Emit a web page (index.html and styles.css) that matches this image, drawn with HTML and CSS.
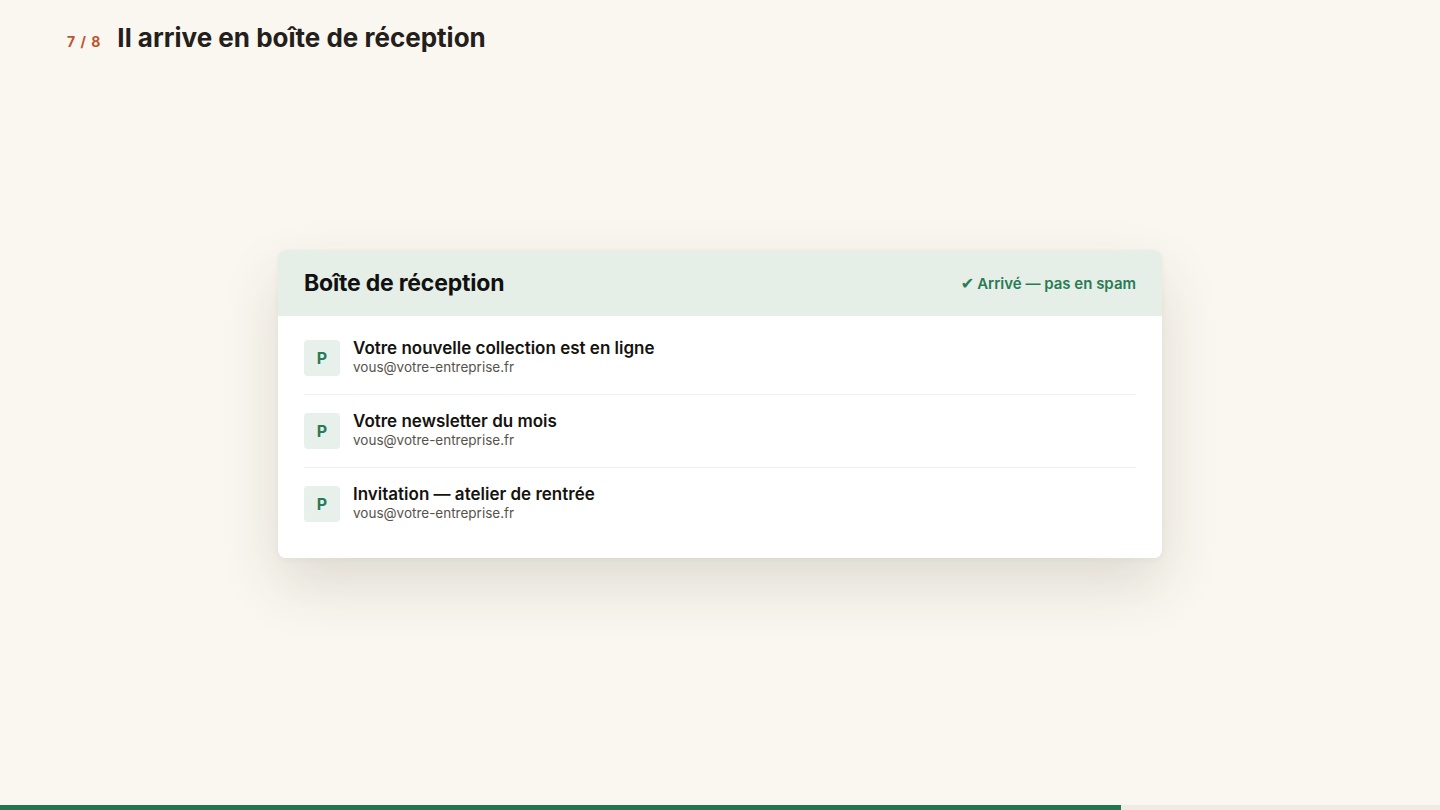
FILE: index.html
```html
<!DOCTYPE html>
<html lang="fr">
<head>
  <meta charset="UTF-8" />
  <meta name="viewport" content="width=device-width, initial-scale=1.0"/>
  <title>Il arrive en boîte de réception</title>
  <link rel="stylesheet" href="styles.css">
</head>
<body>

  <div class="slide">
    <header class="slide-head">
      <span class="step">7 / 8</span>
      <h1>Il arrive en boîte de réception</h1>
    </header>

    <main class="stage">
      <div class="inbox">
        <div class="inbox-head">
          <h2>Boîte de réception</h2>
          <span class="status"><span class="check">✔</span>Arrivé — pas en spam</span>
        </div>

        <ul class="mail-list">
          <li class="mail">
            <div class="avatar">P</div>
            <div class="mail-text">
              <div class="subject">Votre nouvelle collection est en ligne</div>
              <div class="sender">vous@votre-entreprise.fr</div>
            </div>
          </li>
          <li class="mail">
            <div class="avatar">P</div>
            <div class="mail-text">
              <div class="subject">Votre newsletter du mois</div>
              <div class="sender">vous@votre-entreprise.fr</div>
            </div>
          </li>
          <li class="mail">
            <div class="avatar">P</div>
            <div class="mail-text">
              <div class="subject">Invitation — atelier de rentrée</div>
              <div class="sender">vous@votre-entreprise.fr</div>
            </div>
          </li>
        </ul>
      </div>
    </main>

    <div class="progress"><div class="progress-fill" style="width: 77.85%"></div></div>
  </div>

</body>
</html>
```

FILE: styles.css
```css
* {
  margin: 0;
  padding: 0;
  box-sizing: border-box;
}

html, body {
  height: 100%;
  overflow: hidden;
  background: #faf7f0;
  color: #1f1d1a;
  font-family: Inter, "Noto Sans", sans-serif;
}

.slide {
  height: 100vh;
  display: flex;
  flex-direction: column;
}

.slide-head {
  display: flex;
  align-items: baseline;
  gap: 16px;
  padding: 22px 67px 0;
}

.step {
  font-size: 14px;
  font-weight: 700;
  color: #c0532f;
  letter-spacing: 1px;
}

.slide-head h1 {
  font-size: 26px;
  font-weight: 700;
  color: #23201c;
}

.stage {
  flex: 1;
  display: flex;
  align-items: center;
  justify-content: center;
  padding-bottom: 50px;
}

.inbox {
  width: 884px;
  background: #fff;
  border-radius: 8px;
  overflow: hidden;
  box-shadow: 0 26px 60px rgba(60, 50, 30, 0.14), 0 2px 6px rgba(60, 50, 30, 0.04);
}

.inbox-head {
  height: 66px;
  display: flex;
  align-items: center;
  justify-content: space-between;
  padding: 0 26px;
  background: #e5efe8;
}

.inbox-head h2 {
  font-size: 23px;
  font-weight: 700;
  letter-spacing: -0.2px;
  color: #111;
}

.status {
  font-size: 15px;
  font-weight: 600;
  color: #2b7a56;
}

.check {
  font-family: "DejaVu Sans", sans-serif;
  font-size: 16px;
  margin-right: 3px;
}

.mail-list {
  list-style: none;
  padding: 6px 26px 18px;
}

.mail {
  display: flex;
  align-items: center;
  gap: 13px;
  padding: 17px 0;
  border-bottom: 1px solid #f1efea;
}

.mail:last-child {
  border-bottom: none;
}

.avatar {
  width: 36px;
  height: 36px;
  border-radius: 4px;
  background: #e7f0ea;
  color: #2a7a55;
  font-weight: 700;
  font-size: 16px;
  display: flex;
  align-items: center;
  justify-content: center;
}

.subject {
  font-size: 17px;
  font-weight: 600;
  color: #15130f;
  line-height: 18px;
}

.sender {
  font-size: 13.5px;
  color: #57534c;
  line-height: 20px;
}

.progress {
  height: 5px;
  background: #efebe2;
}

.progress-fill {
  height: 100%;
  background: #237551;
}
```
